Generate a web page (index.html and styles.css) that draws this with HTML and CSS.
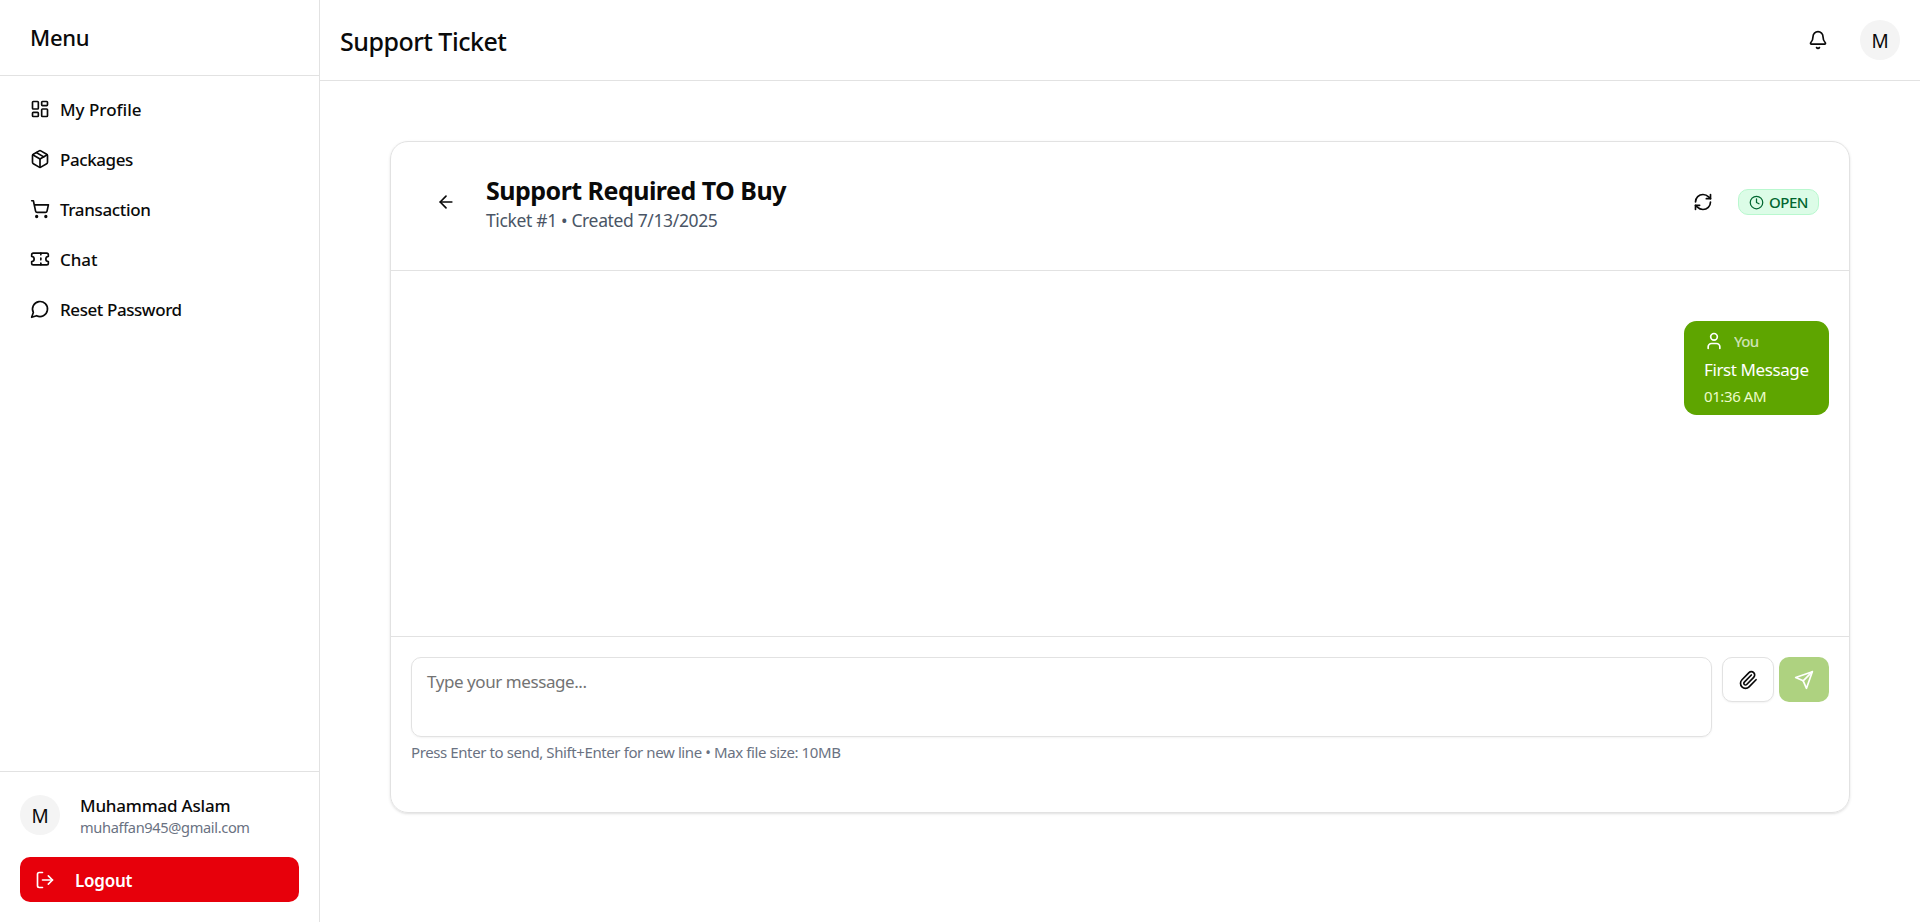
FILE: index.html
```html
<!DOCTYPE html>
<html lang="en">
<head>
<meta charset="utf-8">
<title>Support Ticket</title>
<link rel="stylesheet" href="styles.css">
</head>
<body>
<div class="app">
  <aside class="sidebar">
    <div class="sidebar-head"><span class="menu-title">Menu</span></div>
    <nav class="nav">
      <a class="nav-item nav-profile"><svg class="icon" viewBox="0 0 24 24"><rect width="7" height="9" x="3" y="3" rx="1"/><rect width="7" height="5" x="14" y="3" rx="1"/><rect width="7" height="9" x="14" y="12" rx="1"/><rect width="7" height="5" x="3" y="16" rx="1"/></svg><span class="nav-label">My Profile</span></a>
      <a class="nav-item nav-packages"><svg class="icon" viewBox="0 0 24 24"><path d="M11 21.73a2 2 0 0 0 2 0l7-4A2 2 0 0 0 21 16V8a2 2 0 0 0-1-1.73l-7-4a2 2 0 0 0-2 0l-7 4A2 2 0 0 0 3 8v8a2 2 0 0 0 1 1.73z"/><path d="M12 22V12"/><path d="M3.29 7 12 12l8.71-5"/><path d="m7.5 4.27 9 5.15"/></svg><span class="nav-label">Packages</span></a>
      <a class="nav-item nav-transaction"><svg class="icon" viewBox="0 0 24 24"><circle cx="8" cy="21" r="1"/><circle cx="19" cy="21" r="1"/><path d="M2.05 2.05h2l2.66 12.42a2 2 0 0 0 2 1.58h9.78a2 2 0 0 0 1.95-1.57l1.65-7.43H5.12"/></svg><span class="nav-label">Transaction</span></a>
      <a class="nav-item nav-chat"><svg class="icon" viewBox="0 0 24 24"><path d="M2 9a3 3 0 0 1 0 6v2a2 2 0 0 0 2 2h16a2 2 0 0 0 2-2v-2a3 3 0 0 1 0-6V7a2 2 0 0 0-2-2H4a2 2 0 0 0-2 2Z"/><path d="M13 5v2"/><path d="M13 17v2"/><path d="M13 11v2"/></svg><span class="nav-label">Chat</span></a>
      <a class="nav-item nav-password"><svg class="icon" viewBox="0 0 24 24"><path d="M7.9 20A9 9 0 1 0 4 16.1L2 22Z"/></svg><span class="nav-label">Reset Password</span></a>
    </nav>
    <div class="sidebar-foot">
      <div class="user">
        <span class="avatar">M</span>
        <div class="user-text"><div class="user-name">Muhammad Aslam</div><div class="user-mail">muhaffan945@gmail.com</div></div>
      </div>
      <button class="logout"><svg class="icon" viewBox="0 0 24 24"><path d="M9 21H5a2 2 0 0 1-2-2V5a2 2 0 0 1 2-2h4"/><path d="m16 17 5-5-5-5"/><path d="M21 12H9"/></svg><span class="nav-label">Logout</span></button>
    </div>
  </aside>
  <div class="main">
    <header class="topbar">
      <h1 class="page-title">Support Ticket</h1>
      <div class="topbar-actions">
        <svg class="icon" viewBox="0 0 24 24"><path d="M10.268 21a2 2 0 0 0 3.464 0"/><path d="M3.262 15.326A1 1 0 0 0 4 17h16a1 1 0 0 0 .74-1.673C19.41 13.956 18 12.499 18 8A6 6 0 0 0 6 8c0 4.499-1.411 5.956-2.738 7.326"/></svg>
        <span class="avatar">M</span>
      </div>
    </header>
    <main class="content">
      <section class="card">
        <div class="card-head">
          <svg class="icon" viewBox="0 0 24 24"><path d="m12 19-7-7 7-7"/><path d="M19 12H5"/></svg>
          <div class="ticket">
            <h2 class="ticket-title">Support Required TO Buy</h2>
            <p class="ticket-meta">Ticket #1 • Created 7/13/2025</p>
          </div>
          <svg class="icon" viewBox="0 0 24 24"><path d="M3 12a9 9 0 0 1 9-9 9.75 9.75 0 0 1 6.74 2.74L21 8"/><path d="M21 3v5h-5"/><path d="M21 12a9 9 0 0 1-9 9 9.75 9.75 0 0 1-6.74-2.74L3 16"/><path d="M8 16H3v5"/></svg>
          <span class="badge"><svg class="icon" viewBox="0 0 24 24"><circle cx="12" cy="12" r="10"/><path d="M12 6v6l4 2"/></svg><span>OPEN</span></span>
        </div>
        <div class="messages">
          <div class="bubble">
            <div class="bubble-from"><svg class="icon" viewBox="0 0 24 24"><path d="M19 21v-2a4 4 0 0 0-4-4H9a4 4 0 0 0-4 4v2"/><circle cx="12" cy="7" r="4"/></svg><span class="bubble-name">You</span></div>
            <div class="bubble-text">First Message</div>
            <div class="bubble-time">01:36 AM</div>
          </div>
        </div>
        <div class="composer">
          <div class="composer-row">
            <div class="field">Type your message...</div>
            <div class="composer-actions">
              <button class="attach"><svg class="icon" viewBox="0 0 24 24"><path d="m16 6-8.414 8.586a2 2 0 0 0 2.829 2.829l8.414-8.586a4 4 0 1 0-5.657-5.657l-8.379 8.551a6 6 0 1 0 8.485 8.485l8.379-8.551"/></svg></button>
              <button class="send"><svg class="icon" viewBox="0 0 24 24"><path d="m22 2-7 20-4-9-9-4Z"/><path d="M22 2 11 13"/></svg></button>
            </div>
          </div>
          <p class="hint">Press Enter to send, Shift+Enter for new line • Max file size: 10MB</p>
        </div>
      </section>
    </main>
  </div>
</div>
</body>
</html>
```

FILE: styles.css
```css
* { box-sizing: border-box; margin: 0; padding: 0; }
body { font-family: "Noto Sans", "Open Sans", sans-serif; font-size: 20px; line-height: 30px; color: #0a0a0a; background: #fff; }
button { font: inherit; border: 0; }
.icon { display: block; flex: none; width: 20px; height: 20px; fill: none; stroke: currentColor; stroke-width: 2; stroke-linecap: round; stroke-linejoin: round; }
.avatar { display: flex; align-items: center; justify-content: center; flex: none; width: 40px; height: 40px; padding-top: 1px; border-radius: 50%; background: #f4f4f4; font-size: 19px; }

.app { display: flex; width: 100%; height: 922px; overflow: hidden; white-space: nowrap; }
.sidebar { display: flex; flex-direction: column; flex: none; width: 320px; border-right: 1px solid #e2e2e2; }
.sidebar-head { display: flex; align-items: center; height: 76px; padding: 0 0 2px 30px; border-bottom: 1px solid #e2e2e2; }
.menu-title { font-size: 22px; font-weight: 500; letter-spacing: -.3px; }
.nav { display: flex; flex-direction: column; gap: 10px; flex: 1; padding: 13px 20px; }
.nav-item { display: flex; align-items: center; gap: 10px; height: 40px; padding-left: 10px; font-size: 17px; font-weight: 500; }
.nav-label { padding-top: 2px; }
.nav-packages { letter-spacing: -.43px; }
.nav-transaction { letter-spacing: -.35px; }
.nav-chat { letter-spacing: -.1px; }
.nav-password { letter-spacing: -.42px; }
.sidebar-foot { height: 151px; padding: 20px; border-top: 1px solid #e2e2e2; }
.user { display: flex; align-items: center; gap: 20px; height: 46px; }
.user-name { font-size: 17px; font-weight: 500; line-height: 23px; letter-spacing: -.22px; }
.user-mail { font-size: 14.6px; line-height: 20px; letter-spacing: -.35px; color: #6a7282; }
.logout { display: flex; align-items: center; gap: 20px; width: 100%; height: 45px; margin-top: 19px; padding-left: 15px; border-radius: 10px; background: #e7000b; color: #fff; font-size: 17px; font-weight: 600; letter-spacing: -.25px; }

.main { display: flex; flex-direction: column; flex: 1; min-width: 0; }
.topbar { display: flex; align-items: center; justify-content: space-between; height: 81px; padding: 0 20px; border-bottom: 1px solid #e2e2e2; }
.page-title { padding-top: 1px; font-size: 25px; font-weight: 500; letter-spacing: -.5px; }
.topbar-actions { display: flex; align-items: center; gap: 32px; }
.content { padding: 60px 70px; }
.card { display: flex; flex-direction: column; height: 672px; border: 1px solid #e2e2e2; border-radius: 18px; box-shadow: 0 1px 3px rgba(0,0,0,.1), 0 1px 2px -1px rgba(0,0,0,.1); }
.card-head { display: flex; align-items: center; height: 129px; padding: 0 30px 8px 45px; border-bottom: 1px solid #e2e2e2; }
.ticket { flex: 1; margin-left: 30px; padding-top: 2px; }
.ticket-title { font-size: 25px; font-weight: 700; line-height: 35px; letter-spacing: -.52px; }
.ticket-meta { font-size: 17.5px; line-height: 25px; letter-spacing: -.36px; color: #4a5565; }
.badge { display: flex; align-items: center; gap: 5px; width: 81px; height: 26px; margin-left: 25px; padding: 0 10px; border: 1px solid #b9f8cf; border-radius: 10px; background: #dcfce7; color: #016630; font-size: 15px; font-weight: 500; letter-spacing: -.5px; }
.badge .icon { width: 15px; height: 15px; }
.messages { display: flex; justify-content: flex-end; align-items: flex-start; flex: 1; padding: 50px 20px; }
.bubble { width: 145px; height: 94px; padding: 7px 20px; border-radius: 12.5px; background: #5ea500; color: #fff; }
.bubble-from { display: flex; align-items: center; gap: 10px; height: 26px; font-size: 15px; font-weight: 500; }
.bubble-name { letter-spacing: -.7px; opacity: .7; }
.bubble-text { padding-top: 1px; font-size: 17px; line-height: 30px; letter-spacing: -.4px; }
.bubble-time { font-size: 15px; line-height: 22px; letter-spacing: -.4px; color: #ecfcca; }
.composer { height: 176px; padding: 20px; border-top: 1px solid #e2e2e2; }
.composer-row { display: flex; align-items: flex-start; gap: 10px; }
.field { flex: 1; height: 80px; padding: 10px 15px; border: 1px solid #e2e2e2; border-radius: 10px; box-shadow: 0 1px 2px rgba(0,0,0,.05); color: #737373; font-size: 17px; line-height: 28px; letter-spacing: -.43px; }
.composer-actions { display: flex; gap: 5px; }
.attach, .send { display: flex; align-items: center; justify-content: center; height: 45px; border-radius: 10px; }
.attach { width: 52px; border: 1px solid #e2e2e2; background: #fff; box-shadow: 0 1px 2px rgba(0,0,0,.05); color: #0a0a0a; }
.send { width: 50px; background: #aed280; color: #fff; }
.hint { margin-top: 5px; font-size: 15px; line-height: 20px; letter-spacing: -.4px; color: #6a7282; }
```
